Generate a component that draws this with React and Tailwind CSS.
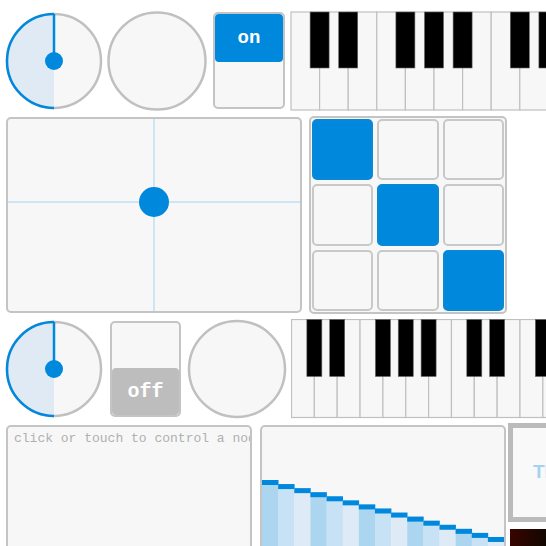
import React from "react";

const mono = "font-['Liberation_Mono','Courier_New',monospace]";

function Dial({ r = 47, on = false }) {
    const c = 50;
    return (
        <svg width="100" height="100" className="block shrink-0">
            <circle cx={c} cy={c} r={r} fill="#f7f7f7" stroke="#c0c0c0" strokeWidth="2.5" />
            {on && (
                <>
                    <path d={`M${c} ${c} L${c} ${c - r} A${r} ${r} 0 0 0 ${c} ${c + r} Z`} fill="#dfeaf5" />
                    <path d={`M${c} ${c - r} A${r} ${r} 0 0 0 ${c} ${c + r}`} fill="none" stroke="#0088dd" strokeWidth="2.5" />
                    <line x1={c} y1={c} x2={c} y2={c - r} stroke="#0088dd" strokeWidth="2.5" />
                    <circle cx={c} cy={c} r="9" fill="#0088dd" />
                </>
            )}
        </svg>
    );
}

function Piano({ keyW, count, blackW, blackH, offset, keyTop, keyH }) {
    const whites = Array.from({ length: count }, (_, i) => i);
    // black key after C, D, F, G, A
    const blacks = whites.filter((i) => [0, 1, 3, 4, 5].includes(i % 7));
    return (
        <svg width={Math.ceil(count * keyW) + 4} height={keyH + keyTop + 1} className="block shrink-0">
            {whites.map((i) => (
                <rect key={i} x={offset + i * keyW} y={keyTop} width={keyW} height={keyH} fill="#f7f7f7" stroke="#c0c0c0" strokeWidth="1.2" />
            ))}
            {blacks.map((i) => (
                <rect key={"b" + i} x={offset + (i + 1) * keyW - blackW / 2} y={keyTop} width={blackW} height={blackH} fill="#000" stroke="#666" strokeWidth="0.6" />
            ))}
        </svg>
    );
}

function Toggle({ on }) {
    if (on) {
        return <div className="shrink-0 mt-[1px] ml-[6px] w-[72px] h-[97px] rounded-[5px] border-2 border-[#c4c4c4] bg-[#f7f7f7] flex flex-col">
            <div className={`h-[48px] rounded-[4px] bg-[#0088dd] flex items-center justify-center text-white font-bold text-[19px] ${mono}`}>on</div>
        </div>
    }
    return <div className="shrink-0 mt-[2px] ml-[6px] w-[71px] h-[96px] rounded-[5px] border-2 border-[#c4c4c4] bg-[#f7f7f7] flex flex-col justify-end">
        <div className={`h-[47px] rounded-[4px] bg-[#bdbdbd] flex items-center justify-center text-white font-bold text-[20px] ${mono}`}>off</div>
    </div>
}

function Position() {
    return <div className="shrink-0 mt-[1px] w-[296px] h-[196px] rounded-[5px] border-2 border-[#c4c4c4] bg-[#f7f7f7] overflow-hidden">
        <svg width="292" height="192" className="block">
            <line x1="146" y1="0" x2="146" y2="192" stroke="#bfe0f5" strokeWidth="1.5" />
            <line x1="0" y1="83" x2="292" y2="83" stroke="#bfe0f5" strokeWidth="1.5" />
            <circle cx="146" cy="83" r="15" fill="#0088dd" />
        </svg>
    </div>
}

function Matrix() {
    const cells = [1, 0, 0, 0, 1, 0, 0, 0, 1];
    return <div className="shrink-0 ml-[7px] w-[198px] h-[198px] rounded-[5px] border-2 border-[#c4c4c4] bg-[#f7f7f7] p-[1px] grid grid-cols-3 grid-rows-3 gap-[4px]">
        {cells.map((c, i) => (
            <div key={i} className={c ? "rounded-[5px] border-2 border-[#0a88d6] bg-[#0088dd]" : "rounded-[5px] border-2 border-[#c8c8c8] bg-[#f7f7f7]"}></div>
        ))}
    </div>
}

function Multislider() {
    const n = 15;
    const w = 242 / n;
    const fills = ["#acd5ef", "#c6e2f4", "#deebf7"];
    return <div className="shrink-0 ml-[8px] mt-[2px] w-[246px] h-[140px] rounded-[5px] border-2 border-[#c4c4c4] bg-[#f7f7f7] overflow-hidden">
        <svg width="242" height="136" className="block">
            {Array.from({ length: n }, (_, i) => {
                const top = 53 + i * 4.07;
                return <g key={i}>
                    <rect x={i * w} y={top} width={w + 0.3} height={136 - top} fill={fills[i % 3]} />
                    <rect x={i * w} y={top} width={w + 0.3} height="5" fill="#0088dd" />
                </g>
            })}
        </svg>
    </div>
}

export default function App() {
    return <div className="w-[546px] h-[546px] overflow-hidden bg-white">
        <div className="flex items-start pt-[11px] pl-[4px] h-[111px]">
            <Dial on r={47} />
            <div className="ml-[3px] shrink-0"><Dial r={48.5} /></div>
            <Toggle on />
            <div className="ml-[5px] shrink-0">
                <Piano keyW={28.6} count={10} blackW={19} blackH={56} offset={1} keyTop={1} keyH={98} />
            </div>
        </div>
        <div className="flex items-start mt-[5px] pl-[6px] h-[198px]">
            <Position />
            <Matrix />
        </div>
        <div className="flex items-start mt-[5px] pl-[4px] h-[99px]">
            <Dial on r={47} />
            <Toggle on={false} />
            <div className="ml-[6px] shrink-0"><Dial r={48} /></div>
            <div className="ml-[4px] shrink-0">
                <Piano keyW={22.85} count={12} blackW={15} blackH={57} offset={0.5} keyTop={0.5} keyH={98} />
            </div>
        </div>
        <div className="flex items-start mt-[5px] pl-[6px]">
            <div className="shrink-0 mt-[2px] w-[246px] h-[140px] rounded-[5px] border-2 border-[#c4c4c4] bg-[#f7f7f7] overflow-hidden">
                <p className={`pl-[6px] pt-[4px] whitespace-nowrap text-[13px] leading-[16px] text-[#b0b0b0] ${mono}`}>click or touch to control a node</p>
            </div>
            <Multislider />
            <div className="shrink-0 ml-[2px] flex flex-col">
                <div className="w-[100px] h-[99px] border-[5px] border-[#bbbbbb] bg-[#f9f9f9] flex items-center pl-[20px]">
                    <span className="font-['Liberation_Sans',Arial,sans-serif] font-bold text-[19px] text-[#a6d2f1]">TILT</span>
                </div>
                <div className="ml-[2px] mt-[7px] w-[100px] h-[40px] bg-[linear-gradient(100deg,#3a0400,#0c0800_40%,#1f3000)]"></div>
            </div>
        </div>
    </div>
}
